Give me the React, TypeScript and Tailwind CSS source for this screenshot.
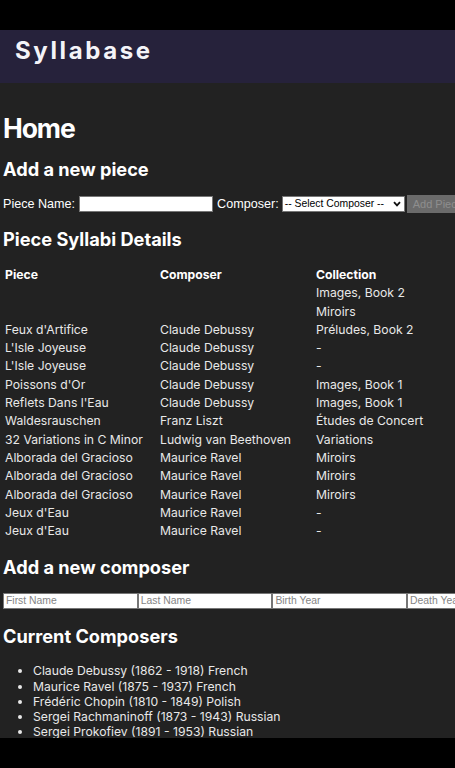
import React from "react";

const rows: [string, string, string][] = [
  ["", "", "Images, Book 2"],
  ["", "", "Miroirs"],
  ["Feux d'Artifice", "Claude Debussy", "Préludes, Book 2"],
  ["L'Isle Joyeuse", "Claude Debussy", "-"],
  ["L'Isle Joyeuse", "Claude Debussy", "-"],
  ["Poissons d'Or", "Claude Debussy", "Images, Book 1"],
  ["Reflets Dans l'Eau", "Claude Debussy", "Images, Book 1"],
  ["Waldesrauschen", "Franz Liszt", "Études de Concert"],
  ["32 Variations in C Minor", "Ludwig van Beethoven", "Variations"],
  ["Alborada del Gracioso", "Maurice Ravel", "Miroirs"],
  ["Alborada del Gracioso", "Maurice Ravel", "Miroirs"],
  ["Alborada del Gracioso", "Maurice Ravel", "Miroirs"],
  ["Jeux d'Eau", "Maurice Ravel", "-"],
  ["Jeux d'Eau", "Maurice Ravel", "-"],
];

const composers = [
  "Claude Debussy (1862 - 1918) French",
  "Maurice Ravel (1875 - 1937) French",
  "Frédéric Chopin (1810 - 1849) Polish",
  "Sergei Rachmaninoff (1873 - 1943) Russian",
  "Sergei Prokofiev (1891 - 1953) Russian",
];

export default function App() {
  return (
    <div className="h-[768px] w-[455px] bg-black py-[30px] overflow-hidden">
      <div className="h-[708px] bg-[#222222] overflow-hidden text-[#e8e8e8] font-['Inter',sans-serif]">
        <header className="h-[53px] bg-[#26223b] flex items-start pt-[8.6px] px-[15px]">
          <span className="text-[24px] font-bold tracking-[2.6px] text-[#f4f4f8] leading-[24px]">Syllabase</span>
        </header>
        <main className="px-[3px] whitespace-nowrap">
          <h1 className="text-[26.5px] font-bold leading-[34px] tracking-[-1.1px] mt-[27.5px] text-white">Home</h1>
          <h2 className="text-[18.2px] font-bold leading-[22px] mt-[13.5px] text-white">Add a new piece</h2>
          <div className="flex items-center mt-[15px] font-['Liberation_Sans',Arial,sans-serif] text-[12.6px] text-white h-[18px]">
            <span className="shrink-0">Piece Name:</span>
            <div className="ml-[4px] shrink-0 w-[134px] h-[16px] bg-white border border-[#767676]" />
            <span className="ml-[4px] shrink-0">Composer:</span>
            <div className="ml-[3px] shrink-0 w-[123px] h-[16px] bg-white border border-[#767676] flex items-center justify-between pl-[2px] pr-[3px] text-black">
              <span className="text-[10.4px] leading-none">-- Select Composer --</span>
              <svg width="8" height="6" viewBox="0 0 8 6"><path d="M1 1.2 L4 4.4 L7 1.2" stroke="#111" strokeWidth="1.8" fill="none" /></svg>
            </div>
            <div className="ml-[2px] shrink-0 h-[18px] pl-[6px] pr-[6px] bg-[#6b6b6b] text-[#8e8e8e] flex items-center text-[11px]">Add Piece</div>
          </div>
          <h2 className="text-[18.2px] font-bold leading-[22px] mt-[15px] text-white">Piece Syllabi Details</h2>
          <div className="mt-[16px] ml-[2px] text-[12.2px] leading-[18.3px]">
            <div className="flex font-bold text-white">
              <div className="w-[155px] shrink-0">Piece</div>
              <div className="w-[156px] shrink-0">Composer</div>
              <div className="w-[155px] shrink-0">Collection</div>
            </div>
            {rows.map((r, i) => (
              <div key={i} className="flex">
                <div className="w-[155px] shrink-0">{r[0]}</div>
                <div className="w-[156px] shrink-0">{r[1]}</div>
                <div className="w-[155px] shrink-0">{r[2]}</div>
              </div>
            ))}
          </div>
          <h2 className="text-[18.2px] font-bold leading-[22px] mt-[16px] text-white">Add a new composer</h2>
          <div className="flex mt-[15px] font-['Liberation_Sans',Arial,sans-serif] text-[10.4px]">
            {["First Name", "Last Name", "Birth Year", "Death Year"].map((p) => (
              <div key={p} className="w-[134.7px] shrink-0 h-[16px] bg-white border border-[#767676] text-[#858585] px-[2px] flex items-center leading-none">{p}</div>
            ))}
          </div>
          <h2 className="text-[18.2px] font-bold leading-[22px] mt-[16px] text-white">Current Composers</h2>
          <ul className="mt-[16px] pl-[30px] list-disc text-[12.2px] leading-[15.25px]">
            {composers.map((c, i) => (
              <li key={i}>{c}</li>
            ))}
          </ul>
        </main>
      </div>
    </div>
  );
}
